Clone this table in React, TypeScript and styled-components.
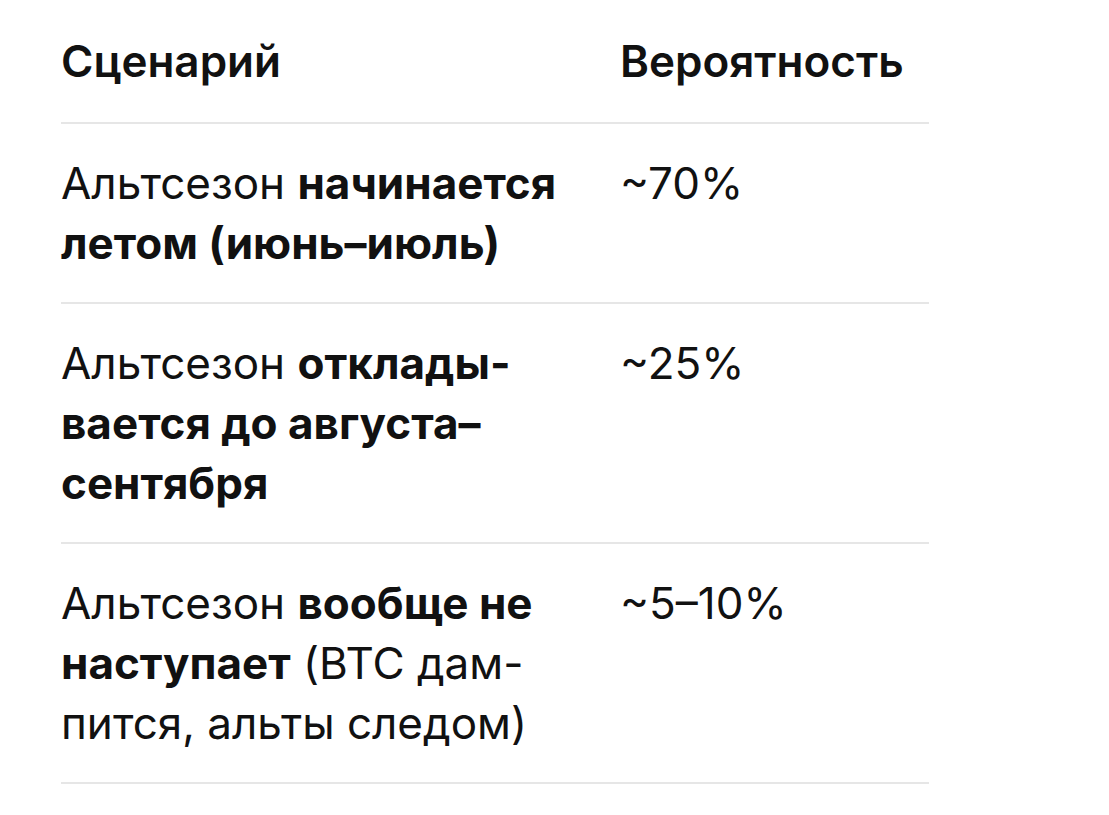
import styled, { createGlobalStyle } from "styled-components";

const Global = createGlobalStyle`
    html, body {
        margin: 0;
        padding: 0;
        background: #ffffff;
    }
    body {
        font-family: Inter, Roboto, "Noto Sans", sans-serif;
        color: #111111;
    }
`

const Page = styled.div`
    padding: 0 0 0 61px;
`

const Table = styled.div`
    width: 868px;
    display: grid;
    grid-template-columns: 559px 1fr;
`

const Cell = styled.div<{ $head?: boolean }>`
    font-size: 44px;
    line-height: 60px;
    font-weight: ${p => (p.$head ? 600 : 400)};
    padding: ${p => (p.$head ? "31px 0 31px 0" : "29px 0 29px 0")};
    border-bottom: 2px solid #e6e6e6;

    b {
        font-weight: 700;
    }
`

const rows = [
    {
        scenario: (
            <>
                Альтсезон <b>начинается<br />летом (июнь–июль)</b>
            </>
        ),
        chance: "~70%",
    },
    {
        scenario: (
            <>
                Альтсезон <b>отклады-<br />вается до августа–<br />сентября</b>
            </>
        ),
        chance: "~25%",
    },
    {
        scenario: (
            <>
                Альтсезон <b>вообще не<br />наступает</b> (BTC дам-<br />пится, альты следом)
            </>
        ),
        chance: "~5–10%",
    },
]

export default function App() {
    return (
        <Page>
            <Global />
            <Table>
                <Cell $head>Сценарий</Cell>
                <Cell $head>Вероятность</Cell>
                {rows.map((r, i) => (
                    <>
                        <Cell key={"s" + i}>{r.scenario}</Cell>
                        <Cell key={"c" + i}>{r.chance}</Cell>
                    </>
                ))}
            </Table>
        </Page>
    )
}
